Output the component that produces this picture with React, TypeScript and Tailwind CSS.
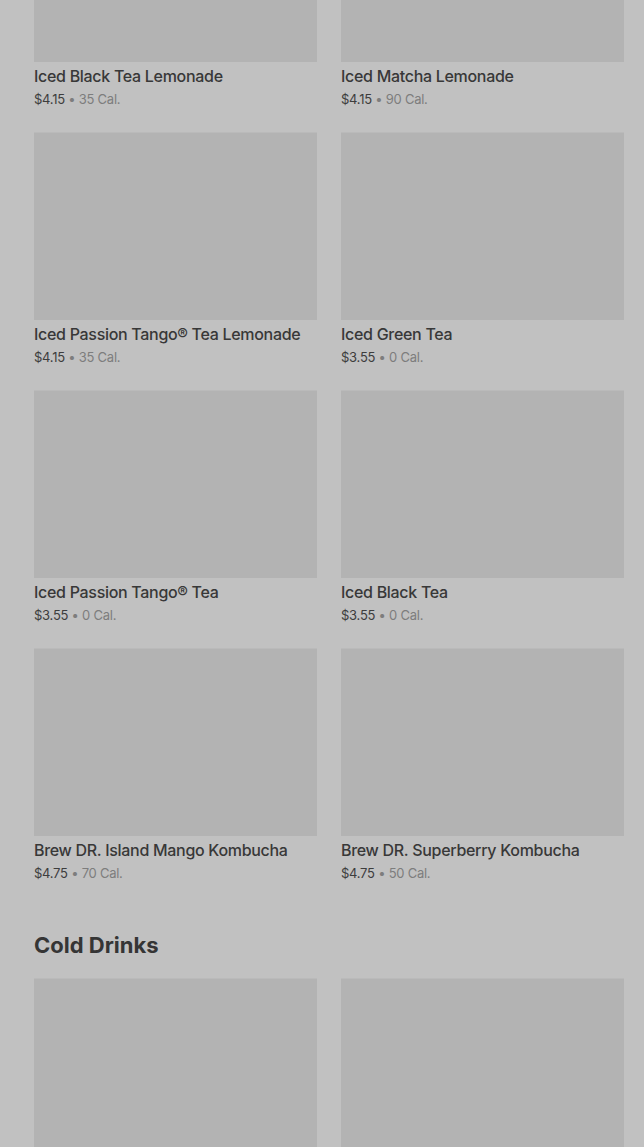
import React from "react";

type Item = { name: string; price: string; cal: string };

const rows: Item[][] = [
  [
    { name: "Iced Black Tea Lemonade", price: "$4.15", cal: "35 Cal." },
    { name: "Iced Matcha Lemonade", price: "$4.15", cal: "90 Cal." },
  ],
  [
    { name: "Iced Passion Tango® Tea Lemonade", price: "$4.15", cal: "35 Cal." },
    { name: "Iced Green Tea", price: "$3.55", cal: "0 Cal." },
  ],
  [
    { name: "Iced Passion Tango® Tea", price: "$3.55", cal: "0 Cal." },
    { name: "Iced Black Tea", price: "$3.55", cal: "0 Cal." },
  ],
  [
    { name: "Brew DR. Island Mango Kombucha", price: "$4.75", cal: "70 Cal." },
    { name: "Brew DR. Superberry Kombucha", price: "$4.75", cal: "50 Cal." },
  ],
];

function Card({ item }: { item?: Item }) {
  return (
    <div className="flex flex-col">
      <div className="h-[188px] bg-[#b3b3b3] border-t border-[#bababa]" />
      {item && (
        <>
          <div className="mt-[2px] text-[16px] leading-6 font-medium text-[#383838] tracking-[-0.3px]">
            {item.name}
          </div>
          <div className="text-[13px] leading-[22px] text-[#3d3d3d] tracking-[-0.25px]">
            {item.price}
            <span className="text-[#7d7d7d]"> • {item.cal}</span>
          </div>
        </>
      )}
    </div>
  );
}

export default function App() {
  return (
    <div
      className="h-[1147px] w-[644px] overflow-hidden bg-[#c1c1c1]"
      style={{ fontFamily: "Inter, 'Noto Sans', sans-serif" }}
    >
      <div className="-mt-[126px] pl-[34px] pr-[20px] flex flex-col">
        <div className="flex flex-col gap-[22px]">
          {rows.map((r, i) => (
            <div key={i} className="grid grid-cols-2 gap-x-[24px]">
              <Card item={r[0]} />
              <Card item={r[1]} />
            </div>
          ))}
        </div>
        <h2 className="mt-[47px] mb-[19px] text-[22px] leading-[28px] font-bold text-[#353535] tracking-[0px]">
          Cold Drinks
        </h2>
        <div className="grid grid-cols-2 gap-x-[24px]">
          <Card />
          <Card />
        </div>
      </div>
    </div>
  );
}
